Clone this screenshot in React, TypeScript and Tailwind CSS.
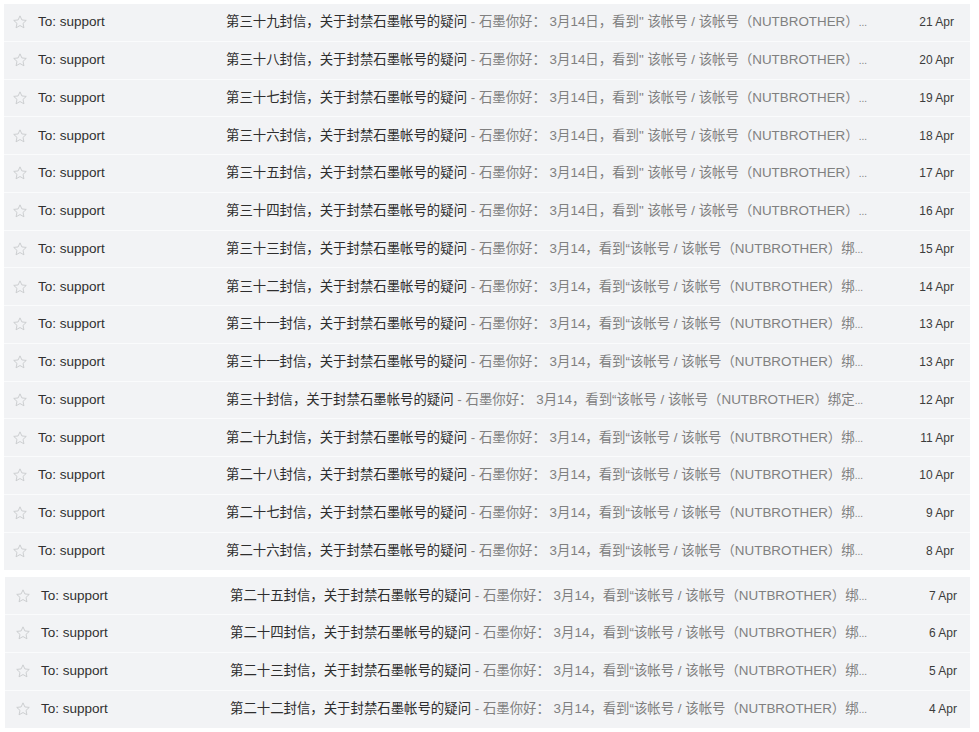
const FONT = {
  fontFamily: '"Liberation Sans", "Noto Sans CJK SC", sans-serif',
};

type Mail = { subject: string; snippet: string; date: string };

const A = "石墨你好： 3月14日，看到\" 该帐号 / 该帐号（NUTBROTHER）";
const B = "石墨你好： 3月14，看到“该帐号 / 该帐号（NUTBROTHER）绑";
const C = "石墨你好： 3月14，看到“该帐号 / 该帐号（NUTBROTHER）绑定";

const first: Mail[] = [
  { subject: "第三十九封信，关于封禁石墨帐号的疑问", snippet: A, date: "21 Apr" },
  { subject: "第三十八封信，关于封禁石墨帐号的疑问", snippet: A, date: "20 Apr" },
  { subject: "第三十七封信，关于封禁石墨帐号的疑问", snippet: A, date: "19 Apr" },
  { subject: "第三十六封信，关于封禁石墨帐号的疑问", snippet: A, date: "18 Apr" },
  { subject: "第三十五封信，关于封禁石墨帐号的疑问", snippet: A, date: "17 Apr" },
  { subject: "第三十四封信，关于封禁石墨帐号的疑问", snippet: A, date: "16 Apr" },
  { subject: "第三十三封信，关于封禁石墨帐号的疑问", snippet: B, date: "15 Apr" },
  { subject: "第三十二封信，关于封禁石墨帐号的疑问", snippet: B, date: "14 Apr" },
  { subject: "第三十一封信，关于封禁石墨帐号的疑问", snippet: B, date: "13 Apr" },
  { subject: "第三十一封信，关于封禁石墨帐号的疑问", snippet: B, date: "13 Apr" },
  { subject: "第三十封信，关于封禁石墨帐号的疑问", snippet: C, date: "12 Apr" },
  { subject: "第二十九封信，关于封禁石墨帐号的疑问", snippet: B, date: "11 Apr" },
  { subject: "第二十八封信，关于封禁石墨帐号的疑问", snippet: B, date: "10 Apr" },
  { subject: "第二十七封信，关于封禁石墨帐号的疑问", snippet: B, date: "9 Apr" },
  { subject: "第二十六封信，关于封禁石墨帐号的疑问", snippet: B, date: "8 Apr" },
];

const second: Mail[] = [
  { subject: "第二十五封信，关于封禁石墨帐号的疑问", snippet: B, date: "7 Apr" },
  { subject: "第二十四封信，关于封禁石墨帐号的疑问", snippet: B, date: "6 Apr" },
  { subject: "第二十三封信，关于封禁石墨帐号的疑问", snippet: B, date: "5 Apr" },
  { subject: "第二十二封信，关于封禁石墨帐号的疑问", snippet: B, date: "4 Apr" },
];

function Star() {
  return (
    <svg width="16" height="16" viewBox="0 0 24 24" fill="none" stroke="#c9cbce" strokeWidth={1.4} strokeLinejoin="round">
      <path d="M12 2.8l2.8 6.1 6.6.7-4.9 4.5 1.4 6.6L12 17.3l-5.9 3.4 1.4-6.6-4.9-4.5 6.6-.7z" />
    </svg>
  );
}

function Row({ mail, shift }: { mail: Mail; shift: boolean }) {
  return (
    <div className="flex h-[37.75px] items-center border-b border-[#fafbfc] last:border-b-0">
      <div className={shift ? "flex w-[36px] shrink-0 pl-[10px]" : "flex w-[34px] shrink-0 pl-[8px]"}>
        <Star />
      </div>
      <div className={shift ? "w-[189px] shrink-0 text-[13.5px] text-[#303030]" : "w-[188px] shrink-0 text-[13.5px] text-[#303030]"}>
        To: support
      </div>
      <div className="min-w-0 flex-1 overflow-hidden whitespace-nowrap text-[13.4px]">
        <span className="text-[#2e2e2e]">{mail.subject}</span>
        <span className="text-[#808080]"> - {mail.snippet}</span>
        <span className="text-[10px] text-[#808080]">...</span>
      </div>
      <div className={shift ? "w-[90px] shrink-0 pr-[13px] text-right text-[12px] text-[#3c3c3c]" : "w-[90px] shrink-0 pr-[16px] text-right text-[12px] text-[#3c3c3c]"}>
        {mail.date}
      </div>
    </div>
  );
}

export default function App() {
  return (
    <div className="h-[732px] w-[979px] bg-white pt-[4px]" style={FONT}>
      <div className="ml-[4px] w-[966px] bg-[#f2f3f5]">
        {first.map((m, i) => (
          <Row key={i} mail={m} shift={false} />
        ))}
      </div>
      <div className="ml-[5px] mt-[7px] w-[965px] bg-[#f2f3f5]">
        {second.map((m, i) => (
          <Row key={i} mail={m} shift={true} />
        ))}
      </div>
    </div>
  );
}
